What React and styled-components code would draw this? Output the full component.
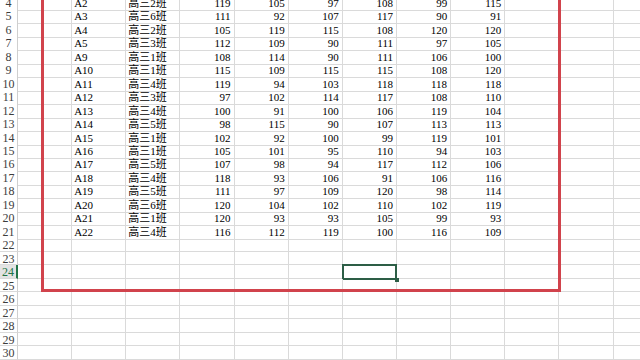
import styled, { createGlobalStyle } from "styled-components";

const COL_W = 54.15;
const ROW_H = 13.47;
const COLS = 12;

const GlobalStyle = createGlobalStyle`
  html, body {
    margin: 0;
    padding: 0;
    background: #fff;
    overflow: hidden;
  }
  body {
    font-family: "Liberation Serif", "Noto Sans CJK SC", serif;
  }
`;

const Sheet = styled.div`
  position: relative;
  width: 640px;
  height: 360px;
  overflow: hidden;
  background: #fff;
`;

const Grid = styled.div`
  margin-top: -4.17px;
`;

const Row = styled.div`
  display: grid;
  grid-template-columns: 18px repeat(${COLS}, ${COL_W}px);
  height: ${ROW_H}px;
`;

const RowHead = styled.div`
  box-sizing: border-box;
  border-right: ${(p) => (p.$active ? "2px solid #217346" : "1px solid #cfcfcf")};
  border-bottom: 1px solid #dadada;
  background: ${(p) => (p.$active ? "#e3e3e3" : "#fff")};
  color: ${(p) => (p.$active ? "#217346" : "#3c3c3c")};
  font-size: 12px;
  line-height: 14px;
  text-align: center;
  overflow: hidden;
`;

const Cell = styled.div`
  position: relative;
  box-sizing: border-box;
  border-right: 1px solid #dadada;
  border-bottom: 1px solid #dadada;
  padding: 0 3px 0 2px;
  font-size: 11px;
  line-height: 14px;
  color: #000;
  text-align: ${(p) => (p.$num ? "right" : "left")};
  white-space: nowrap;

  ${(p) =>
    p.$selected &&
    `
    &::after {
      content: "";
      position: absolute;
      left: -1px;
      top: -1px;
      right: -1px;
      bottom: -2px;
      border: 2px solid #2d5e46;
    }
    &::before {
      content: "";
      position: absolute;
      right: -3px;
      bottom: -4px;
      width: 4px;
      height: 4px;
      background: #2d5e46;
      z-index: 1;
    }
  `}
`;

const Frame = styled.div`
  position: absolute;
  left: 41px;
  top: -10px;
  width: 520px;
  height: 302px;
  box-sizing: border-box;
  border: 3px solid #d1434c;
  pointer-events: none;
`;

const students = [
  ["A2", "高三2班", 119, 105, 97, 108, 99, 115],
  ["A3", "高三6班", 111, 92, 107, 117, 90, 91],
  ["A4", "高三2班", 105, 119, 115, 108, 120, 120],
  ["A5", "高三3班", 112, 109, 90, 111, 97, 105],
  ["A9", "高三1班", 108, 114, 90, 111, 106, 100],
  ["A10", "高三1班", 115, 109, 115, 115, 108, 120],
  ["A11", "高三4班", 119, 94, 103, 118, 118, 118],
  ["A12", "高三3班", 97, 102, 114, 117, 108, 110],
  ["A13", "高三4班", 100, 91, 100, 106, 119, 104],
  ["A14", "高三5班", 98, 115, 90, 107, 113, 113],
  ["A15", "高三1班", 102, 92, 100, 99, 119, 101],
  ["A16", "高三1班", 105, 101, 95, 110, 94, 103],
  ["A17", "高三5班", 107, 98, 94, 117, 112, 106],
  ["A18", "高三4班", 118, 93, 106, 91, 106, 116],
  ["A19", "高三5班", 111, 97, 109, 120, 98, 114],
  ["A20", "高三6班", 120, 104, 102, 110, 102, 119],
  ["A21", "高三1班", 120, 93, 93, 105, 99, 93],
  ["A22", "高三4班", 116, 112, 119, 100, 116, 109],
];

const FIRST_ROW = 4;
const LAST_ROW = 30;
const ACTIVE_ROW = 24;
const ACTIVE_COL = 6; // column G

function buildRow(n) {
  const data = students[n - FIRST_ROW];
  const cells = Array(COLS).fill("");
  if (data) {
    data.forEach((v, i) => {
      cells[i + 1] = v;
    });
  }
  return cells;
}

const App = () => {
  const rows = [];
  for (let n = FIRST_ROW; n <= LAST_ROW; n++) rows.push(n);

  return (
    <>
      <GlobalStyle />
      <Sheet>
        <Grid>
          {rows.map((n) => (
            <Row key={n}>
              <RowHead $active={n === ACTIVE_ROW}>{n}</RowHead>
              {buildRow(n).map((v, c) => (
                <Cell
                  key={c}
                  $num={typeof v === "number"}
                  $selected={n === ACTIVE_ROW && c === ACTIVE_COL}
                >
                  {v}
                </Cell>
              ))}
            </Row>
          ))}
        </Grid>
        <Frame />
      </Sheet>
    </>
  );
};

export default App;
